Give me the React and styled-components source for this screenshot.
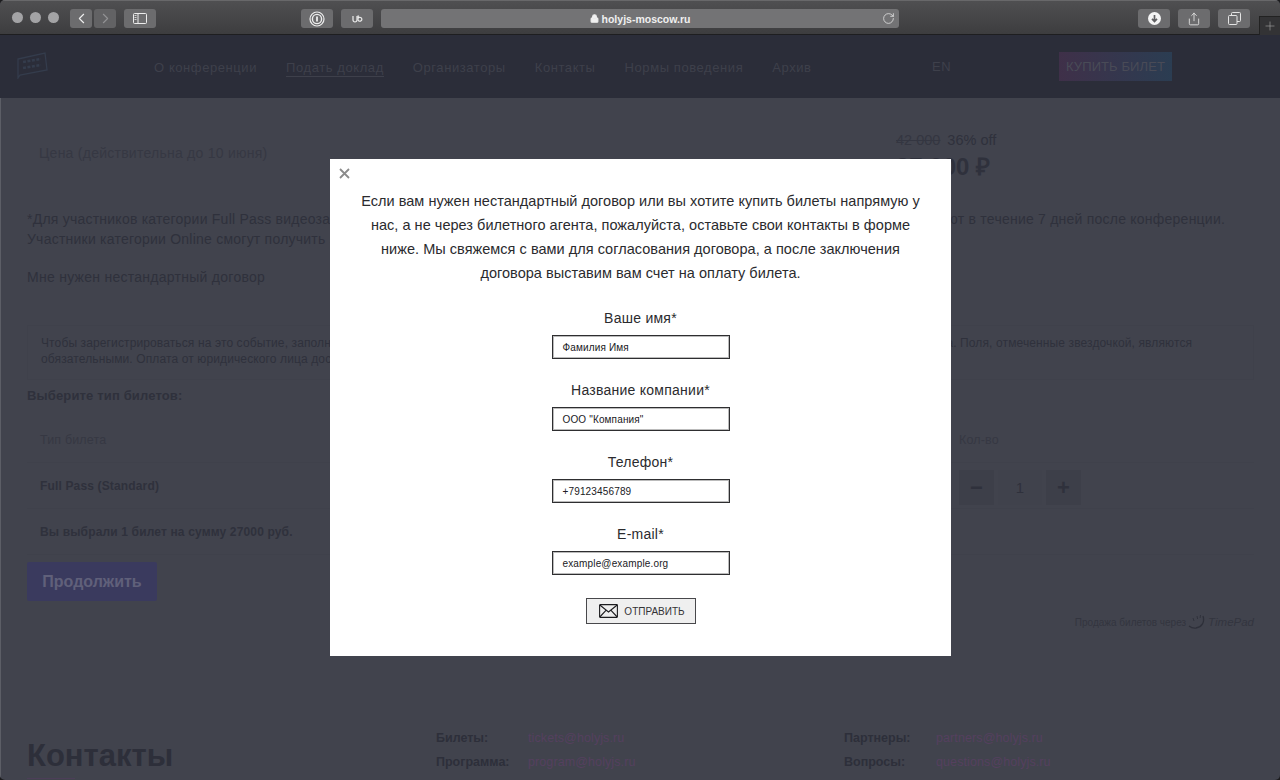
import React from "react";
import styled, { createGlobalStyle } from "styled-components";
import { ChevronLeft, ChevronRight, RotateCw, Lock, Plus, Share } from "lucide-react";

const Global = createGlobalStyle`
  html, body { margin: 0; padding: 0; height: 780px; overflow: hidden; background: #1c1c1e; }
  * { box-sizing: border-box; }
  body { font-family: "Liberation Sans", Arial, sans-serif; }
`;

const Window = styled.div`
  position: relative;
  width: 1280px;
  height: 780px;
  overflow: hidden;
  border-radius: 5px;
  background: #41434d;
  display: flex;
  flex-direction: column;
`;

const Toolbar = styled.div`
  position: relative;
  flex: 0 0 35px;
  display: flex;
  align-items: flex-start;
  padding: 8px 0 0 12px;
  background: linear-gradient(#4f4f51, #3d3d3f);
  border-top: 1px solid #68686a;
  border-bottom: 1px solid #1e1e20;
  color: #e8e8e8;
`;

const Lights = styled.div`
  display: flex;
  gap: 7px;
  margin: 3px 11px 0 0;
`;

const Light = styled.span`
  width: 11px;
  height: 11px;
  border-radius: 50%;
  background: #a3a3a5;
`;

const ToolButton = styled.div`
  width: ${(p) => p.$w || 32}px;
  height: 19px;
  margin-left: ${(p) => p.$ml || 0}px;
  flex: none;
  display: flex;
  align-items: center;
  justify-content: center;
  border-radius: 3px;
  background: ${(p) => (p.$dim ? "#626264" : "#6c6c6e")};
  color: ${(p) => (p.$dim ? "#919193" : "#ececec")};
`;

const UrlBar = styled.div`
  position: relative;
  width: 518px;
  height: 19px;
  margin-left: 8px;
  flex: none;
  display: flex;
  align-items: center;
  justify-content: center;
  gap: 3px;
  border-radius: 3px;
  background: #737375;
  color: #f0f0f0;
  font-size: 10.5px;
  font-weight: 700;
`;

const Reload = styled.span`
  position: absolute;
  right: 4px;
  top: 3px;
  display: flex;
  color: #e0e0e0;
`;

const TabAdd = styled.div`
  position: absolute;
  right: 0;
  top: 15px;
  width: 21px;
  height: 19px;
  display: flex;
  align-items: center;
  justify-content: center;
  background: #333335;
  border-left: 1px solid #222;
  border-top: 1px solid #222;
  color: #a8a8aa;
`;

const SiteHeader = styled.header`
  flex: 0 0 63px;
  display: flex;
  align-items: center;
  padding: 0 0 0 15px;
  background: #2b2d39;
  color: #3e404b;
  font-size: 13px;
  letter-spacing: 0.58px;
`;

const Logo = styled.svg`
  flex: none;
  margin-right: 106px;
  margin-top: -2px;
`;

const Nav = styled.nav`
  display: flex;
  gap: 29px;
  width: 778px;
  flex: none;
  margin-top: 3px;
`;

const NavLink = styled.a`
  white-space: nowrap;
  padding-bottom: 1px;
  border-bottom: 1px solid ${(p) => (p.$active ? "#3e404b" : "transparent")};
`;

const Lang = styled.span`
  width: 127px;
  flex: none;
`;

const BuyButton = styled.div`
  width: 113px;
  height: 29px;
  flex: none;
  display: flex;
  align-items: center;
  justify-content: center;
  background: linear-gradient(90deg, #3f3049, #2b3d52);
  color: #494b57;
  font-size: 13px;
  letter-spacing: 0.1px;
`;

const Content = styled.main`
  flex: 1;
  min-height: 0;
  padding: 33px 26px 0 26px;
  color: #2f313c;
  border-left: 1px solid #5c5e66;
`;

const PriceRow = styled.div`
  display: flex;
  justify-content: space-between;
  height: 62px;
  padding-left: 12px;
`;

const PriceLabel = styled.div`
  font-size: 14px;
  letter-spacing: 0.25px;
  color: #363843;
  padding-top: 14px;
`;

const PriceBox = styled.div`
  width: 358px;
  padding-top: 1px;
`;

const OldPriceLine = styled.div`
  font-size: 14.5px;
  line-height: 16px;
  color: #2f313c;
`;

const OldPrice = styled.s`
  margin-right: 7px;
  color: #343641;
`;

const BigPrice = styled.div`
  font-size: 24px;
  font-weight: 700;
  line-height: 28px;
  margin-top: 5px;
`;

const Note = styled.p`
  margin: 0;
  padding-top: 16px;
  font-size: 14px;
  line-height: 20px;
  letter-spacing: 0.23px;
  white-space: nowrap;
`;

const ContractLink = styled.div`
  margin-top: 18px;
  font-size: 14px;
  line-height: 20px;
  letter-spacing: 0.27px;
`;

const NoticeBox = styled.div`
  margin-top: 38px;
  height: 55px;
  padding: 9px 13px;
  font-size: 12px;
  line-height: 16px;
  letter-spacing: 0.12px;
  white-space: nowrap;
  border: 1px solid #3f414b;
`;

const SectionTitle = styled.div`
  margin-top: 8px;
  font-size: 13px;
  font-weight: 700;
  line-height: 16px;
  letter-spacing: 0.15px;
`;

const TicketTable = styled.div`
  margin-top: 18px;
  font-size: 12px;
  letter-spacing: 0.15px;
`;

const TicketRow = styled.div`
  display: grid;
  grid-template-columns: 919px 1fr;
  align-items: center;
  height: ${(p) => p.$h}px;
  padding: 0 13px ${(p) => p.$pb || 0}px;
  border-bottom: 1px solid ${(p) => (p.$line ? "#3f414b" : "transparent")};
  font-weight: ${(p) => (p.$bold ? 700 : 400)};
  font-size: ${(p) => (p.$bold ? 12 : 12.5)}px;
  color: ${(p) => (p.$bold ? "#2f313c" : "#363843")};
`;

const Stepper = styled.div`
  display: flex;
  gap: 4px;
  margin-top: 4px;
`;

const StepCell = styled.div`
  width: ${(p) => p.$w}px;
  height: 35px;
  display: flex;
  align-items: center;
  justify-content: center;
  background: ${(p) => (p.$button ? "#3d3f49" : "#40424c")};
  color: #2f313c;
  font-size: ${(p) => (p.$button ? 22 : 15)}px;
  font-weight: ${(p) => (p.$button ? 700 : 400)};
`;

const ContinueButton = styled.div`
  width: 130px;
  height: 39px;
  margin-top: 7px;
  display: flex;
  align-items: center;
  justify-content: center;
  border-radius: 2px;
  background: #3a3a5e;
  color: #60607a;
  font-size: 16px;
  font-weight: 700;
`;

const Powered = styled.div`
  display: flex;
  justify-content: flex-end;
  align-items: center;
  gap: 2px;
  margin-top: 8px;
  height: 26px;
  font-size: 10px;
  color: #33353f;
`;

const TimePad = styled.span`
  font-size: 11.5px;
  font-style: italic;
`;

const Contacts = styled.section`
  display: grid;
  grid-template-columns: 409px 408px 1fr;
  margin-top: 91px;
`;

const ContactsTitle = styled.h2`
  margin: 13px 0 0;
  width: 148px;
  font-size: 31px;
  line-height: 34px;
  font-weight: 700;
  color: #2d2f3a;
  position: relative;
  height: 40px;
  &::after {
    content: "";
    position: absolute;
    left: 0;
    bottom: 0;
    width: 48px;
    height: 1px;
    background: #4c3e58;
  }
`;

const ContactColumn = styled.div`
  display: grid;
  grid-template-columns: 92px 1fr;
  grid-auto-rows: 24px;
  align-items: center;
  font-size: 12.5px;
`;

const ContactName = styled.span`
  font-weight: 700;
  color: #2d2f3a;
`;

const ContactMail = styled.span`
  color: #55405f;
  letter-spacing: 0.1px;
`;

const Overlay = styled.div`
  position: absolute;
  left: 0;
  top: 35px;
  right: 0;
  bottom: 0;
  display: flex;
  justify-content: center;
  align-items: flex-start;
  padding-top: 124px;
`;

const Modal = styled.div`
  position: relative;
  width: 621px;
  height: 497px;
  margin-left: 1px;
  padding: 30px 27px 0;
  display: flex;
  flex-direction: column;
  align-items: center;
  background: #fff;
  color: #2b2b2e;
`;

const Close = styled.span`
  position: absolute;
  left: 9px;
  top: 9px;
  display: flex;
  color: #8b8b8b;
`;

const Intro = styled.p`
  margin: 0 0 24px;
  width: 564px;
  font-size: 14.5px;
  line-height: 24px;
  text-align: center;
  letter-spacing: 0.03px;
`;

const Field = styled.label`
  display: flex;
  flex-direction: column;
  align-items: center;
  margin-bottom: 22px;
`;

const FieldLabel = styled.span`
  font-size: 14px;
  line-height: 18px;
  margin-bottom: 8px;
  letter-spacing: 0.25px;
`;

const TextInput = styled.div`
  width: 178px;
  height: 24px;
  display: flex;
  align-items: center;
  padding-left: 10px;
  border: 1px solid #2e2e30;
  box-shadow: inset 0 0 0 1px rgba(60, 60, 60, 0.35);
  font-size: 10px;
  letter-spacing: 0.15px;
  color: #202024;
  background: #fff;
`;

const SendButton = styled.div`
  width: 110px;
  height: 26px;
  margin-top: 1px;
  padding-left: 3px;
  display: flex;
  align-items: center;
  justify-content: center;
  gap: 6px;
  background: #efefef;
  border: 1px solid #48484b;
  font-size: 10px;
  color: #333336;
`;

const Icon1P = () => (
  <svg width="16" height="16" viewBox="0 0 16 16" fill="none" stroke="#ededed">
    <circle cx="8" cy="8" r="7" strokeWidth="1.2" />
    <circle cx="8" cy="8" r="4.6" strokeWidth="1.4" />
    <path d="M8 5.4v5.2" strokeWidth="1.8" />
  </svg>
);

const IconUd = () => (
  <svg width="11" height="8" viewBox="0 0 11 8" fill="none" stroke="#ececec" strokeWidth="1.2">
    <path d="M1 1v4a2 2 0 0 0 4 0V1" />
    <path d="M6 3.5A2 2 0 1 1 6 5V1h1" />
  </svg>
);

const IconSidebar = () => (
  <svg width="14" height="11" viewBox="0 0 14 11" fill="none" stroke="#ececec">
    <rect x=".5" y=".5" width="13" height="10" rx="1" />
    <path d="M5 .5v10" />
    <path d="M1.5 2.5h2M1.5 4.5h2M1.5 6.5h2" strokeWidth=".8" />
  </svg>
);

const IconDownload = () => (
  <svg width="13" height="13" viewBox="0 0 13 13">
    <circle cx="6.5" cy="6.5" r="6.5" fill="#f4f4f4" />
    <path d="M6.5 3v6M4 6.8l2.5 2.6L9 6.8" fill="none" stroke="#5f5f61" strokeWidth="1.7" />
  </svg>
);

const IconTabs = () => (
  <svg width="13" height="13" viewBox="0 0 13 13" fill="none" stroke="#e4e4e4">
    <rect x=".5" y="3.5" width="8.5" height="9" rx="1" />
    <path d="M3.5 3.5V1.5a1 1 0 0 1 1-1h7a1 1 0 0 1 1 1v7a1 1 0 0 1-1 1H9" />
  </svg>
);

const IconEnvelope = () => (
  <svg width="19" height="14" viewBox="0 0 19 14" fill="none" stroke="#1c1c1f" strokeWidth="1.1">
    <rect x=".6" y=".6" width="17.8" height="12.8" rx=".6" />
    <path d="M.8 1l8.7 7L18.2 1M.8 13l6.4-6.8M18.2 13l-6.4-6.8" />
  </svg>
);

const IconClose = () => (
  <svg width="11" height="11" viewBox="0 0 11 11" stroke="currentColor" strokeWidth="1.8" fill="none">
    <path d="M1 1l9 9M10 1l-9 9" />
  </svg>
);

const IconTimePad = () => (
  <svg width="18" height="17" viewBox="0 0 18 17" fill="none" stroke="#2e303a" strokeWidth="1.3">
    <path d="M15 2c2 6-1 11-7 12-3 .4-5-.4-7-2" />
    <path d="M5 4l1 3M9 2l.6 3M12.5 1l-.4 3" strokeWidth=".9" />
  </svg>
);

const navItems = ["О конференции", "Подать доклад", "Организаторы", "Контакты", "Нормы поведения", "Архив"];

const fields = [
  ["Ваше имя*", "Фамилия Имя"],
  ["Название компании*", 'ООО "Компания"'],
  ["Телефон*", "+79123456789"],
  ["E-mail*", "example@example.org"],
];

export default function App() {
  return (
    <Window>
      <Global />
      <Toolbar>
        <Lights>
          <Light />
          <Light />
          <Light />
        </Lights>
        <ToolButton $w={22}>
          <ChevronLeft size={17} strokeWidth={1.6} />
        </ToolButton>
        <ToolButton $w={22} $ml={2} $dim>
          <ChevronRight size={17} strokeWidth={1.6} />
        </ToolButton>
        <ToolButton $ml={8}>
          <IconSidebar />
        </ToolButton>
        <ToolButton $ml={145}>
          <Icon1P />
        </ToolButton>
        <ToolButton $ml={8}>
          <IconUd />
        </ToolButton>
        <UrlBar>
          <Lock size={9} strokeWidth={3} fill="#f0f0f0" />
          holyjs-moscow.ru
          <Reload>
            <RotateCw size={13} strokeWidth={1.5} />
          </Reload>
        </UrlBar>
        <ToolButton $ml={239}>
          <IconDownload />
        </ToolButton>
        <ToolButton $ml={8}>
          <Share size={14} strokeWidth={1.4} />
        </ToolButton>
        <ToolButton $ml={8}>
          <IconTabs />
        </ToolButton>
        <TabAdd>
          <Plus size={14} strokeWidth={1} />
        </TabAdd>
      </Toolbar>

      <SiteHeader>
        <Logo width="33" height="27" viewBox="0 0 33 27" fill="none" stroke="#343c4c" strokeWidth="1.3">
          <path d="M3 7 30 1l2 17-27 5-2 3V7z" />
          <path d="M8 10l18-3M8 16l18-3" strokeWidth="2.4" strokeDasharray="3 1.5" />
        </Logo>
        <Nav>
          {navItems.map((item, i) => (
            <NavLink key={item} $active={i === 1}>
              {item}
            </NavLink>
          ))}
        </Nav>
        <Lang>EN</Lang>
        <BuyButton>КУПИТЬ БИЛЕТ</BuyButton>
      </SiteHeader>

      <Content>
        <PriceRow>
          <PriceLabel>Цена (действительна до 10 июня)</PriceLabel>
          <PriceBox>
            <OldPriceLine>
              <OldPrice>42 000</OldPrice>36% off
            </OldPriceLine>
            <BigPrice>27 000 ₽</BigPrice>
          </PriceBox>
        </PriceRow>

        <Note>
          *Для участников категории Full Pass видеозаписи докладов станут доступны в личном кабинете участника сразу, а полный доступ откроют в течение 7 дней после конференции.
          <br />
          Участники категории Online смогут получить записи после окончания конференции.
        </Note>
        <ContractLink>Мне нужен нестандартный договор</ContractLink>

        <NoticeBox>
          Чтобы зарегистрироваться на это событие, заполните, пожалуйста, форму и выберите нужное количество билетов на следующем же шаге оформления заказа. Поля, отмеченные звездочкой, являются
          <br />
          обязательными. Оплата от юридического лица доступна на следующем шаге.
        </NoticeBox>

        <SectionTitle>Выберите тип билетов:</SectionTitle>
        <TicketTable>
          <TicketRow $h={41} $pb={5} $line>
            <span>Тип билета</span>
            <span>Кол-во</span>
          </TicketRow>
          <TicketRow $h={46} $line $bold>
            <span>Full Pass (Standard)</span>
            <Stepper>
              <StepCell $w={35} $button>−</StepCell>
              <StepCell $w={44}>1</StepCell>
              <StepCell $w={35} $button>+</StepCell>
            </Stepper>
          </TicketRow>
          <TicketRow $h={46} $line $bold>
            <span>Вы выбрали 1 билет на сумму 27000 руб.</span>
          </TicketRow>
        </TicketTable>
        <ContinueButton>Продолжить</ContinueButton>
        <Powered>
          Продажа билетов через
          <IconTimePad />
          <TimePad>TimePad</TimePad>
        </Powered>

        <Contacts>
          <ContactsTitle>Контакты</ContactsTitle>
          <ContactColumn>
            <ContactName>Билеты:</ContactName>
            <ContactMail>tickets@holyjs.ru</ContactMail>
            <ContactName>Программа:</ContactName>
            <ContactMail>program@holyjs.ru</ContactMail>
          </ContactColumn>
          <ContactColumn>
            <ContactName>Партнеры:</ContactName>
            <ContactMail>partners@holyjs.ru</ContactMail>
            <ContactName>Вопросы:</ContactName>
            <ContactMail>questions@holyjs.ru</ContactMail>
          </ContactColumn>
        </Contacts>
      </Content>

      <Overlay>
        <Modal>
          <Close>
            <IconClose />
          </Close>
          <Intro>
            Если вам нужен нестандартный договор или вы хотите купить билеты напрямую у нас, а не через билетного агента, пожалуйста, оставьте свои контакты в форме ниже. Мы свяжемся с вами для согласования договора, а после заключения договора выставим вам счет на оплату билета.
          </Intro>
          {fields.map(([label, value]) => (
            <Field key={label}>
              <FieldLabel>{label}</FieldLabel>
              <TextInput>{value}</TextInput>
            </Field>
          ))}
          <SendButton>
            <IconEnvelope />
            ОТПРАВИТЬ
          </SendButton>
        </Modal>
      </Overlay>
    </Window>
  );
}
